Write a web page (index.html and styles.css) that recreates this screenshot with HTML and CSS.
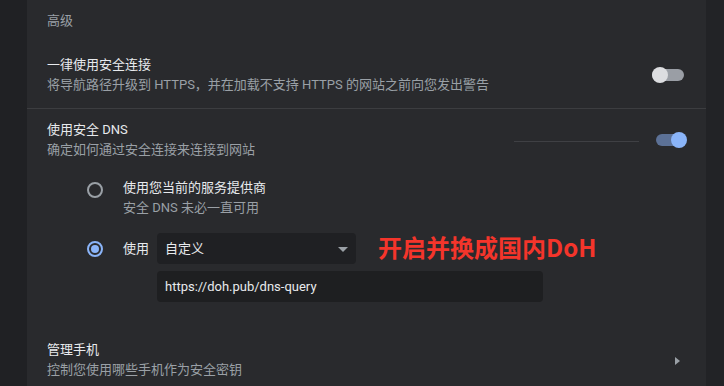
FILE: index.html
```html
<!DOCTYPE html>
<html lang="zh-CN">
<head>
<meta charset="utf-8">
<title>高级</title>
<link rel="stylesheet" href="styles.css">
</head>
<body>
<div class="page">
  <div class="gutter"></div>
  <main class="card">
    <div class="section-title">高级</div>

    <div class="row row-divided">
      <div class="text">
        <div class="label">一律使用安全连接</div>
        <div class="sub">将导航路径升级到 HTTPS，并在加载不支持 HTTPS 的网站之前向您发出警告</div>
      </div>
      <div class="toggle"><span class="knob"></span></div>
    </div>

    <div class="row row-dns">
      <div class="text">
        <div class="label">使用安全 DNS</div>
        <div class="sub">确定如何通过安全连接来连接到网站</div>
      </div>
      <div class="streak"></div>
      <div class="toggle on"><span class="knob"></span></div>
    </div>

    <div class="radio-group">
      <div class="option">
        <span class="radio"></span>
        <div class="text">
          <div class="label">使用您当前的服务提供商</div>
          <div class="sub">安全 DNS 未必一直可用</div>
        </div>
      </div>
      <div class="option option-custom">
        <span class="radio checked"></span>
        <span class="label use">使用</span>
        <div class="custom-fields">
          <div class="select-wrap">
            <div class="select">
              <span>自定义</span>
              <svg class="caret" width="10" height="5" viewBox="0 0 10 5"><path d="M0 0h10L5 5z" fill="#9aa0a6"/></svg>
            </div>
            <div class="annotation">开启并换成国内DoH</div>
          </div>
          <div class="input">https://doh.pub/dns-query</div>
        </div>
      </div>
    </div>

    <div class="row row-link">
      <div class="text">
        <div class="label">管理手机</div>
        <div class="sub">控制您使用哪些手机作为安全密钥</div>
      </div>
      <svg class="chevron" width="5" height="8" viewBox="0 0 5 8"><path d="M0 0l5 4-5 4z" fill="#9aa0a6"/></svg>
    </div>
  </main>
  <div class="gutter gutter-right"></div>
</div>
</body>
</html>
```

FILE: styles.css
```css
* { box-sizing: border-box; }
html, body {
  margin: 0;
  padding: 0;
  background: #202124;
  width: 724px;
  height: 386px;
  overflow: hidden;
}
body {
  font-family: Roboto, "Noto Sans CJK SC", sans-serif;
  font-size: 13px;
  line-height: 20px;
  color: #e8eaed;
}
.page {
  display: flex;
  height: 386px;
}
.gutter {
  width: 27px;
  flex-shrink: 0;
  background: #202124;
}
.gutter-right {
  width: 18px;
  background: #222326;
}
.card {
  width: 679px;
  flex-shrink: 0;
  background: #292a2d;
  display: flex;
  flex-direction: column;
}
.section-title {
  padding: 11px 20px 9px;
  color: #9aa0a6;
}
.row {
  display: flex;
  align-items: center;
  padding: 0 22px 0 20px;
}
.text { flex: 1; min-width: 0; }
.label { color: #e8eaed; white-space: nowrap; }
.sub { color: #9aa0a6; white-space: nowrap; }
.row-divided {
  padding-top: 15px;
  padding-bottom: 13px;
  border-bottom: 1px solid #3c3d40;
}
.row-dns {
  padding-top: 11px;
}
.streak {
  width: 125px;
  height: 1px;
  background: #3f4044;
  margin-right: 17px;
  margin-top: 2px;
}
.toggle {
  width: 32px;
  height: 12px;
  border-radius: 6px;
  background: #9a9ea5;
  display: flex;
  align-items: center;
  flex-shrink: 0;
}
.knob {
  width: 16px;
  height: 16px;
  border-radius: 50%;
  background: #dcdde0;
  flex-shrink: 0;
}
.toggle.on {
  width: 28px;
  background: #5c7196;
  justify-content: flex-end;
}
.toggle.on .knob {
  background: #8ab4f8;
  margin-right: -3px;
}
.radio-group {
  padding-left: 60px;
}
.option {
  display: flex;
  align-items: flex-start;
}
.option:first-child { padding-top: 18px; }
.radio {
  width: 16px;
  height: 16px;
  border-radius: 50%;
  border: 2px solid #9aa0a6;
  margin-top: 4px;
  margin-right: 20px;
  flex-shrink: 0;
  display: flex;
  align-items: center;
  justify-content: center;
}
.radio.checked { border-color: #8ab4f8; }
.radio.checked::after {
  content: "";
  width: 8px;
  height: 8px;
  border-radius: 50%;
  background: #8ab4f8;
}
.option-custom {
  margin-top: 15px;
}
.option-custom .radio { margin-top: 8px; }
.use {
  line-height: 31px;
  margin-right: 8px;
}
.custom-fields {
  display: flex;
  flex-direction: column;
  gap: 7px;
}
.select-wrap {
  position: relative;
  width: 199px;
}
.select {
  height: 31px;
  border-radius: 4px;
  background: #1f2023;
  display: flex;
  align-items: center;
  justify-content: space-between;
  padding: 0 8px 0 8px;
  color: #e8eaed;
}
.caret { margin-top: 1px; }
.annotation {
  position: absolute;
  left: 221px;
  top: -1px;
  white-space: nowrap;
  font-family: "Noto Sans CJK SC", sans-serif;
  font-weight: 700;
  font-size: 24px;
  line-height: 30px;
  color: #f4352b;
}
.input {
  width: 386px;
  height: 31px;
  border-radius: 4px;
  background: #1e1f21;
  padding: 0 8px;
  line-height: 31px;
  color: #e8eaed;
}
.row-link {
  margin-top: 38px;
}
.chevron {
  margin-right: 4px;
  margin-top: 2px;
}
```
